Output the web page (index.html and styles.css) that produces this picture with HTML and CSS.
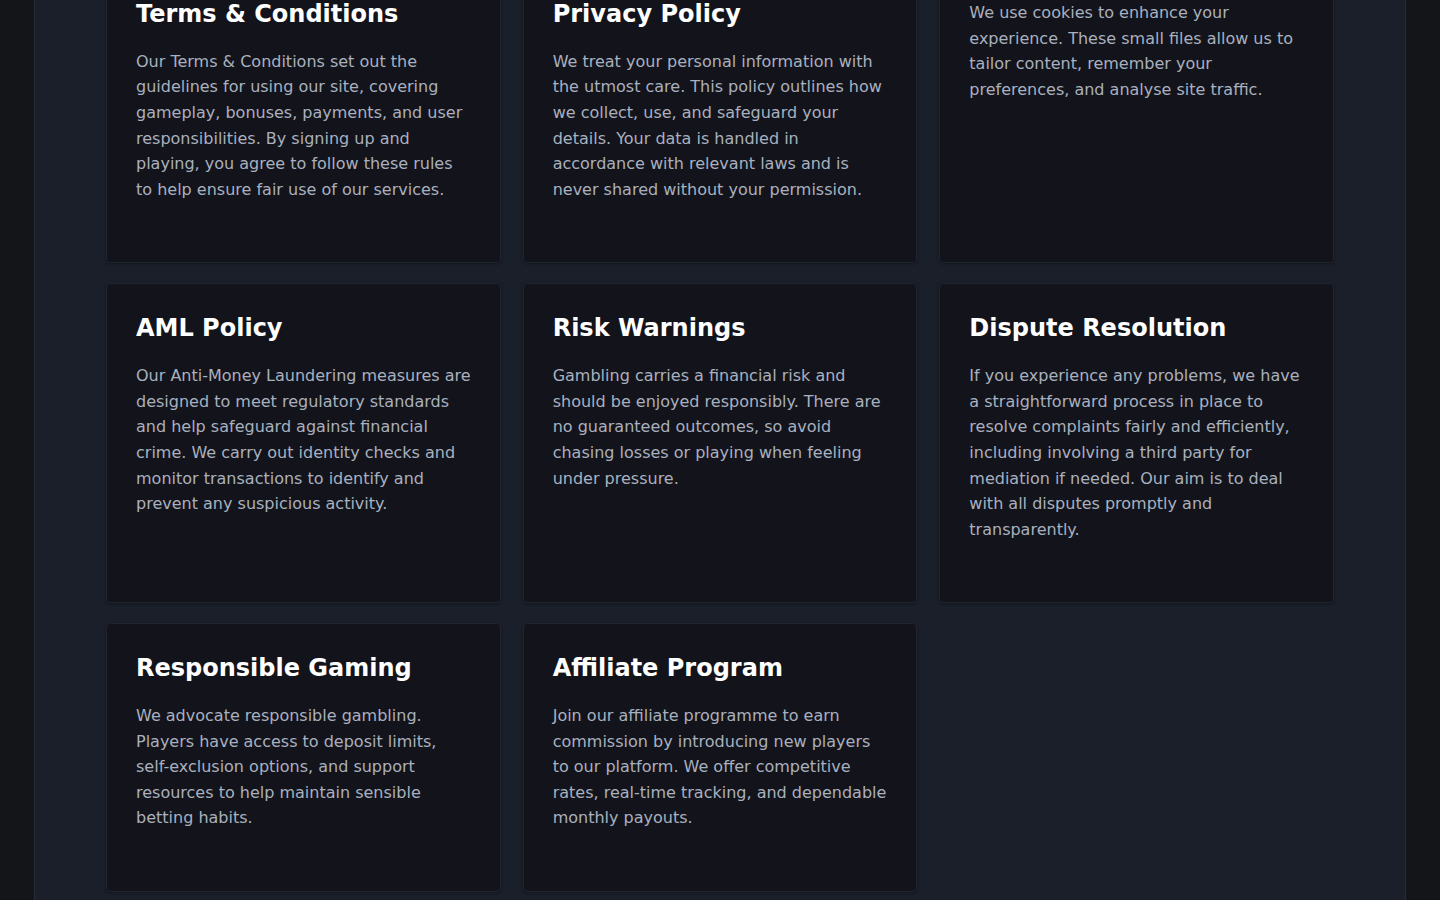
FILE: index.html
```html
<!DOCTYPE html>
<html>
<head>
<meta charset="utf-8">
<title>Policies</title>
<meta name="viewport" content="width=device-width, initial-scale=1.0">
<link rel="stylesheet" href="styles.css">
</head>
<body>
<div class="page">
  <div class="grid">
    <div class="card">
      <h3>Terms &amp; Conditions</h3>
      <p>Our Terms &amp; Conditions set out the guidelines for using our site, covering gameplay, bonuses, payments, and user responsibilities. By signing up and playing, you agree to follow these rules to help ensure fair use of our services.</p>
    </div>
    <div class="card">
      <h3>Privacy Policy</h3>
      <p>We treat your personal information with the utmost care. This policy outlines how we collect, use, and safeguard your details. Your data is handled in accordance with relevant laws and is never shared without your permission.</p>
    </div>
    <div class="card">
      <p>We use cookies to enhance your experience. These small files allow us to tailor content, remember your preferences, and analyse site traffic.</p>
    </div>
    <div class="card">
      <h3>AML Policy</h3>
      <p>Our Anti-Money Laundering measures are designed to meet regulatory standards and help safeguard against financial crime. We carry out identity checks and monitor transactions to identify and prevent any suspicious activity.</p>
    </div>
    <div class="card">
      <h3>Risk Warnings</h3>
      <p>Gambling carries a financial risk and should be enjoyed responsibly. There are no guaranteed outcomes, so avoid chasing losses or playing when feeling under pressure.</p>
    </div>
    <div class="card">
      <h3>Dispute Resolution</h3>
      <p>If you experience any problems, we have a straightforward process in place to resolve complaints fairly and efficiently, including involving a third party for mediation if needed. Our aim is to deal with all disputes promptly and transparently.</p>
    </div>
    <div class="card">
      <h3>Responsible Gaming</h3>
      <p>We advocate responsible gambling. Players have access to deposit limits, self-exclusion options, and support resources to help maintain sensible betting habits.</p>
    </div>
    <div class="card">
      <h3>Affiliate Program</h3>
      <p>Join our affiliate programme to earn commission by introducing new players to our platform. We offer competitive rates, real-time tracking, and dependable monthly payouts.</p>
    </div>
  </div>
</div>
</body>
</html>
```
FILE: styles.css
```css
html, body {
  margin: 0;
  padding: 0;
}

body {
  font-family: 'DejaVu Sans', 'Liberation Sans', sans-serif;
  background: #141519;
  color: #a9b0bf;
  overflow: hidden;
}

.page {
  width: 1228px;
  margin: 0 auto;
  min-height: 1000px;
  background: #1b1f2a;
  border-left: 1px solid #262b36;
  border-right: 1px solid #262b36;
  padding: 0 71px 60px;
}

.grid {
  display: grid;
  grid-template-columns: repeat(3, 1fr);
  gap: 20px 22px;
  margin-top: -31px;
}

.card {
  background: #13141b;
  border: 1px solid #20242e;
  border-radius: 4px;
  padding: 30px 28px 29px 29px;
  box-shadow: 0 1px 3px rgba(0, 0, 0, 0.35);
}

.card h3 {
  margin: 0 0 20px;
  font-size: 24px;
  line-height: 1.2;
  font-weight: bold;
  color: #ffffff;
}

.card p {
  margin: 0 0 31px;
  font-size: 16px;
  line-height: 1.6;
}
```
